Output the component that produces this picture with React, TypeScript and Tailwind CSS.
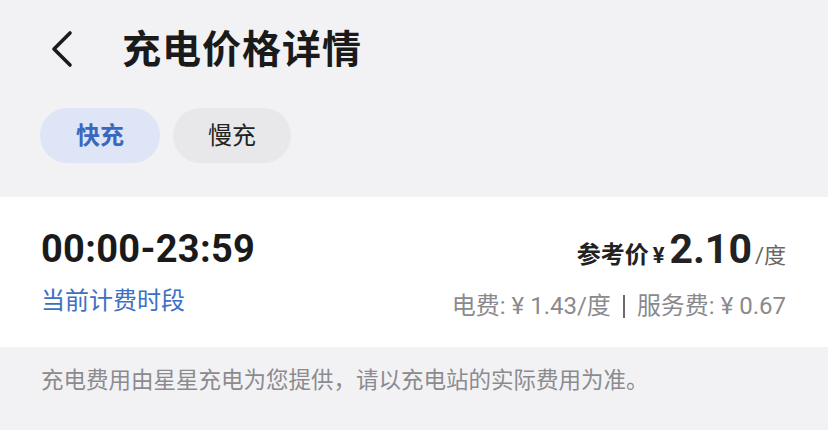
import React from "react";

export default function App() {
  const font = { fontFamily: "Roboto, 'Noto Sans CJK SC', sans-serif" };
  return (
    <div className="w-[828px] h-[430px] bg-[#f2f2f5] overflow-hidden" style={font}>
      <div className="h-[100px] flex items-center pl-[48px]">
        <svg width="28" height="40" viewBox="0 0 28 40" className="mt-[-2px]">
          <path d="M22 4 L6 20 L22 36" fill="none" stroke="#1a1a1a" strokeWidth="3.6" strokeLinecap="round" strokeLinejoin="round" />
        </svg>
        <div className="ml-[46px] text-[39px] font-bold text-[#1a1a1a] leading-none tracking-[1px]">充电价格详情</div>
      </div>
      <div className="flex gap-[13px] pl-[40px] mt-[8px]">
        <div className="w-[120px] h-[55px] rounded-full bg-[#dde5f6] flex items-center justify-center text-[24px] font-bold text-[#3b68bf]">快充</div>
        <div className="w-[118px] h-[55px] rounded-full bg-[#e8e8ea] flex items-center justify-center text-[24px] text-[#222]">慢充</div>
      </div>
      <div className="mt-[34px] h-[150px] bg-white flex justify-between pl-[41px] pr-[42px] pt-[30px]">
        <div className="flex flex-col">
          <div className="text-[38px] font-bold text-[#1a1a1a] leading-[44px] tracking-[0.3px]">00:00-23:59</div>
          <div className="text-[24px] text-[#3d6fc4] mt-[15px] leading-[30px]">当前计费时段</div>
        </div>
        <div className="flex flex-col items-end">
          <div className="flex items-baseline leading-[44px]">
            <span className="text-[24px] font-bold text-[#222]">参考价</span>
            <span className="text-[22px] font-bold text-[#222] ml-[4px]">¥</span>
            <span className="text-[41px] font-bold text-[#222] ml-[5px]">2.10</span>
            <span className="text-[22px] text-[#666] ml-[3px]">/度</span>
          </div>
          <div className="text-[24px] text-[#8a8a8e] mt-[13px] leading-[30px] flex items-center">
            <span>电费: ¥ 1.43/度</span>
            <span className="inline-block w-[2px] h-[23px] bg-[#6a6a6e] mx-[12px]"></span>
            <span>服务费: ¥ 0.67</span>
          </div>
        </div>
      </div>
      <div className="px-[41px] pt-[18px] text-[22.5px] text-[#8b8b8f] leading-[30px]">
        充电费用由星星充电为您提供，请以充电站的实际费用为准。
      </div>
    </div>
  );
}
